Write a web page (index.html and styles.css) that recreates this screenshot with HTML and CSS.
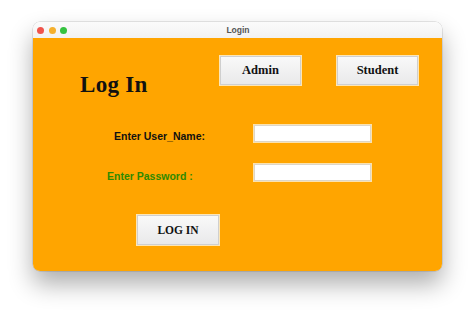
FILE: index.html
```html
<!DOCTYPE html>
<html>
<head>
<meta charset="utf-8">
<link rel="stylesheet" href="styles.css">
</head>
<body>
<div class="window">
  <div class="titlebar">
    <div class="lights">
      <span class="light red"></span>
      <span class="light yellow"></span>
      <span class="light green"></span>
    </div>
    <div class="wtitle">Login</div>
  </div>
  <div class="content">
    <div class="top">
      <h1 class="heading">Log In</h1>
      <button class="btn btn-role">Admin</button>
      <button class="btn btn-role btn-student">Student</button>
    </div>
    <div class="row row-user">
      <label class="label label-user">Enter User_Name:</label>
      <input class="field" type="text">
    </div>
    <div class="row row-pass">
      <label class="label label-pass">Enter Password :</label>
      <input class="field" type="password">
    </div>
    <div class="actions">
      <button class="btn btn-login">LOG IN</button>
    </div>
  </div>
</div>
</body>
</html>
```

FILE: styles.css
```css
html, body {
  margin: 0;
  padding: 0;
  background: #ffffff;
}
body {
  width: 474px;
  height: 315px;
  overflow: hidden;
}
.window {
  margin: 22px 0 0 33px;
  width: 409px;
  height: 249px;
  border-radius: 7px;
  overflow: hidden;
  box-shadow: 0 0 0 0.5px rgba(0,0,0,0.18), 0 13px 24px rgba(0,0,0,0.32);
  display: flex;
  flex-direction: column;
}
.titlebar {
  height: 16px;
  background: linear-gradient(#fbfbfb, #f2f2f2);
  position: relative;
  display: flex;
  align-items: center;
  justify-content: center;
  flex: none;
}
.lights {
  position: absolute;
  left: 4px;
  top: 5px;
  display: flex;
  gap: 4.5px;
}
.light {
  width: 7px;
  height: 7px;
  border-radius: 50%;
  display: block;
}
.red { background: #f0544c; }
.yellow { background: #f5b02d; }
.green { background: #35c23f; }
.wtitle {
  font-family: "Liberation Sans", Arial, sans-serif;
  font-size: 8.5px;
  font-weight: bold;
  color: #555;
  padding-left: 1px;
}
.content {
  flex: 1;
  background: #ffa500;
  padding-top: 18px;
}
.top {
  display: flex;
  align-items: flex-start;
}
.heading {
  margin: 17px 0 0 47px;
  width: 140px;
  font-family: "Liberation Serif", "Times New Roman", serif;
  font-weight: bold;
  font-size: 23px;
  line-height: 23px;
  color: #111;
  letter-spacing: 0.3px;
}
.btn {
  font-family: "Liberation Serif", "Times New Roman", serif;
  font-weight: bold;
  color: #111;
  background: linear-gradient(#f9f9f9, #e9e9ea);
  border: 1px solid #cfcfcf;
  box-shadow: 0 0 0 1px #fde6b6;
  padding: 0;
  margin: 0;
}
.btn-role {
  width: 81px;
  height: 29px;
  font-size: 12.5px;
}
.btn-student {
  margin-left: 36px;
}
.row {
  display: flex;
  align-items: flex-start;
}
.row-user { margin-top: 29px; }
.row-pass { margin-top: 21px; }
.label {
  font-family: "Liberation Sans", Arial, sans-serif;
  font-weight: bold;
  font-size: 10.5px;
  line-height: 13px;
}
.label-user {
  margin-left: 81px;
  width: 140px;
  padding-top: 5px;
  color: #111;
}
.label-pass {
  margin-left: 74px;
  width: 147px;
  padding-top: 6px;
  color: #2f8a00;
}
.field {
  box-sizing: border-box;
  width: 117px;
  height: 17px;
  margin: 0;
  padding: 0 3px;
  background: #ffffff;
  border: 1px solid #ddd6c8;
  box-shadow: 0 0 0 1px #fbe2ae;
  outline: none;
}
.actions {
  margin-top: 32px;
  padding-left: 104px;
  display: flex;
}
.btn-login {
  width: 82px;
  height: 30px;
  font-size: 11.5px;
}
```
